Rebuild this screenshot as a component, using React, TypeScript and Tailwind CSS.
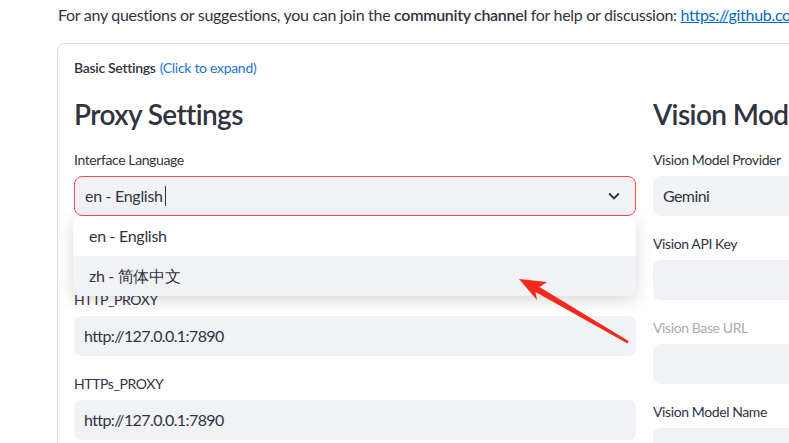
import { Check } from "lucide-react";

// ── Small form pieces ──────────────────────────────────────

function FieldLabel({ text, disabled = false }: { text: string; disabled?: boolean }) {
  return (
    <div
      className={
        "h-[24px] mb-[4px] flex items-center text-[14px] leading-none tracking-[-0.4px] " +
        (disabled ? "text-[#a9abb1]" : "text-[#31333f]")
      }
    >
      {text}
    </div>
  );
}

function TextField({ label, value = "", disabled = false }: { label: string; value?: string; disabled?: boolean }) {
  return (
    <div>
      <FieldLabel text={label} disabled={disabled} />
      <div className="h-[40px] rounded-lg bg-[#f0f2f6] flex items-center pl-[10px] text-[16px] tracking-[-0.6px] text-[#31333f]">
        {value}
      </div>
    </div>
  );
}

function ChevronDown() {
  return (
    <svg width="22" height="22" viewBox="0 0 24 24" className="text-[#31333f]">
      <path fill="currentColor" d="M7.41 8.59 12 13.17l4.59-4.58L18 10l-6 6-6-6 1.41-1.41z" />
    </svg>
  );
}

// ── Language select, opened ────────────────────────────────

const languages = ["en - English", "zh - 简体中文"];

function LanguageSelect() {
  return (
    <div className="relative">
      <FieldLabel text="Interface Language" />
      <div className="h-[40px] rounded-lg bg-[#f0f2f6] border border-[#ff4b4b] flex items-center pl-[10px] pr-[10px] text-[16px] tracking-[-0.3px] text-[#31333f]">
        <span>en - English</span>
        <span className="ml-[2px] w-px h-[20px] bg-[#31333f]" />
        <span className="ml-auto flex items-center">
          <ChevronDown />
        </span>
      </div>

      {/* open listbox */}
      <div className="absolute left-[-1px] right-0 top-[68px] z-10 rounded-lg bg-white overflow-hidden shadow-[0_4px_16px_rgba(0,0,0,0.16)]">
        {languages.map((lang, i) => (
          <div
            key={lang}
            className={
              "h-[40px] flex items-center pl-[16px] text-[16px] tracking-[-0.3px] text-[#31333f] " +
              (i === 1 ? "bg-[#f0f2f6]" : "bg-white")
            }
          >
            {lang}
          </div>
        ))}
      </div>
    </div>
  );
}

// ── Red annotation arrow ───────────────────────────────────

function PointerArrow() {
  return (
    <svg className="absolute left-0 top-0 z-20 pointer-events-none" width="789" height="443">
      <polygon
        fill="#f4281c"
        points="519,279 547,282 539.5,287 628.5,341 627.5,343.5 535.5,292 537,300"
      />
    </svg>
  );
}

export default function App() {
  return (
    <div className="relative w-[789px] h-[443px] overflow-hidden bg-white font-['Lato',sans-serif] text-[#31333f]">
      <p className="pl-[58px] pt-[3px] h-[29px] leading-[24px] text-[16px] tracking-[-0.3px] whitespace-nowrap">
        For any questions or suggestions, you can join the <b className="font-semibold">community channel</b> for
        help or discussion:{" "}
        <span className="text-[#0068c9] underline">https://github.com/linyqh/NarratoAI/issues</span>
      </p>

      <div className="ml-[57px] mt-[14px] w-[1200px] h-[480px] border border-[#dcdde0] rounded-lg pl-[16px] pt-[13px]">
        <div className="h-[20px] flex items-center text-[14px] tracking-[-0.3px]">
          <span className="font-semibold">Basic Settings</span>
          <span className="ml-[4px] text-[#1c74d4]">(Click to expand)</span>
        </div>

        <div className="mt-[20px] flex gap-[17px]">
          {/* left column */}
          <div className="w-[562px] flex flex-col">
            <h3 className="h-[34px] leading-[34px] text-[28px] font-semibold tracking-[-0.6px] mb-[17px]">
              Proxy Settings
            </h3>
            <div className="flex flex-col gap-[16px]">
              <LanguageSelect />
              <label className="h-[40px] flex items-center gap-2 text-[14px]">
                <span className="w-[16px] h-[16px] rounded bg-[#ff4b4b] flex items-center justify-center text-white">
                  <Check size={12} strokeWidth={3} />
                </span>
                Enable Proxy
              </label>
              <TextField label="HTTP_PROXY" value="http://127.0.0.1:7890" />
              <TextField label="HTTPs_PROXY" value="http://127.0.0.1:7890" />
            </div>
          </div>

          {/* right column */}
          <div className="w-[562px] flex flex-col">
            <h3 className="h-[34px] leading-[34px] text-[28px] font-semibold tracking-[-0.6px] mb-[17px] whitespace-nowrap">
              Vision Model Settings
            </h3>
            <div className="flex flex-col gap-[16px]">
              <TextField label="Vision Model Provider" value="Gemini" />
              <TextField label="Vision API Key" />
              <TextField label="Vision Base URL" disabled />
              <TextField label="Vision Model Name" value="gemini-1.5-flash" />
            </div>
          </div>
        </div>
      </div>

      <PointerArrow />
    </div>
  );
}
